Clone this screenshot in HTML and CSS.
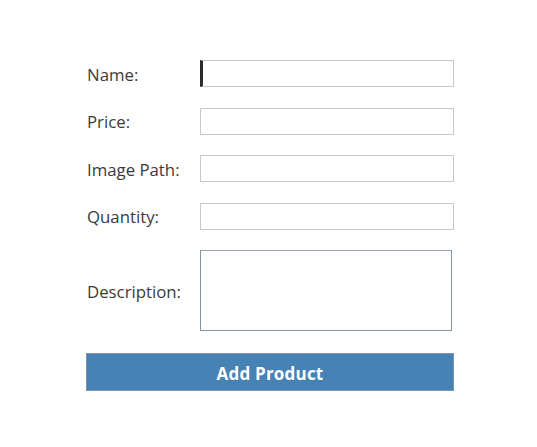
FILE: index.html
```html
<!DOCTYPE html>
<html>
<head>
<meta charset="utf-8">
<link rel="stylesheet" href="styles.css">
</head>
<body>
<form class="product-form">
  <div class="fields">
    <label class="label" for="name">Name:</label>
    <input class="field field-focused" id="name" type="text">
    <label class="label" for="price">Price:</label>
    <input class="field" id="price" type="text">
    <label class="label" for="image">Image Path:</label>
    <input class="field" id="image" type="text">
    <label class="label" for="qty">Quantity:</label>
    <input class="field" id="qty" type="text">
    <label class="label" for="desc">Description:</label>
    <textarea class="field area" id="desc"></textarea>
  </div>
  <button class="submit" type="button">Add Product</button>
</form>
</body>
</html>
```

FILE: styles.css
```css
html, body {
  margin: 0;
  padding: 0;
  background: #ffffff;
}
body {
  font-family: "Open Sans", "Noto Sans", sans-serif;
  color: #333333;
}
.product-form {
  width: 368px;
  margin-left: 86px;
  padding-top: 60px;
}
.fields {
  display: grid;
  grid-template-columns: 114px 254px;
  row-gap: 20.5px;
  align-items: center;
}
.label {
  padding-left: 1px;
  padding-top: 2px;
  font-size: 16.8px;
  line-height: 24px;
  color: #3a3a3a;
}
.field {
  box-sizing: border-box;
  width: 254px;
  height: 27px;
  margin: 0;
  border: 1px solid #c8c8c8;
  background: #fff;
  padding: 0 4px;
  outline: none;
}
.field-focused {
  border-left: 3px solid #2b2b2b;
}
.area {
  width: 252px;
  height: 81px;
  resize: none;
  border: 1px solid #8595a4;
  border-top-color: #9aa7b3;
}
.submit {
  display: block;
  box-sizing: border-box;
  width: 368px;
  height: 38px;
  margin-top: 22px;
  padding-top: 3px;
  background: #4682b4;
  border: 1px solid #7e93a6;
  color: #ffffff;
  font-family: "Open Sans", "Noto Sans", sans-serif;
  font-weight: 700;
  font-size: 17px;
  letter-spacing: 0.2px;
}
```
